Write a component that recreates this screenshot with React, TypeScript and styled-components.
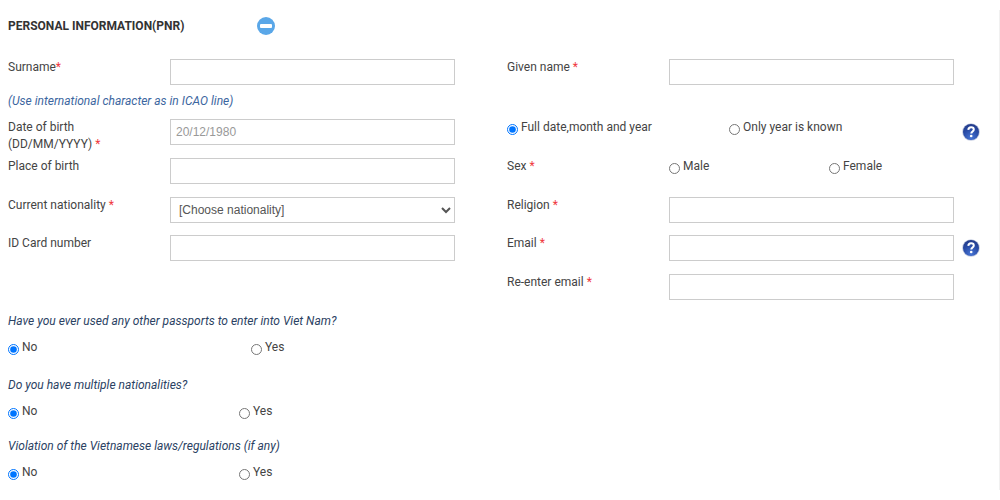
import React from "react";
import styled, { createGlobalStyle } from "styled-components";

const GlobalStyle = createGlobalStyle`
  *, *::before, *::after { box-sizing: border-box; }
  body {
    margin: 0;
    background: #fff;
    color: #444;
    font: 12px/17px Roboto, "Liberation Sans", sans-serif;
  }
`;

const Page = styled.main`
  padding: 10px 0 10px 0;
`;

const Panel = styled.form`
  border-right: 1px solid #f1f1f1;
  padding: 0 1px 9px 8px;
`;

const Header = styled.header`
  display: flex;
  align-items: center;
  height: 32px;
  gap: 73px;
`;

const Title = styled.h1`
  margin: 0;
  font-size: 12px;
  font-weight: 700;
  color: #333;
`;

const IconButton = styled.button`
  display: flex;
  padding: 0;
  border: 0;
  background: none;
  cursor: pointer;
`;

const HelpButton = styled(IconButton)`
  margin: 4px 0 0 8px;
`;

const Row = styled.div<{ $height?: number }>`
  display: grid;
  grid-template-columns: 162px 1fr 52px 162px 1fr 44px;
  align-items: start;
  height: ${(p) => p.$height ?? 39}px;
`;

const Label = styled.label<{ $right?: boolean }>`
  grid-column: ${(p) => (p.$right ? 4 : 1)};
`;

const GroupLabel = styled.span`
  grid-column: 4;
`;

const Star = styled.span`
  color: #f0383d;
`;

const Input = styled.input<{ $right?: boolean }>`
  grid-column: ${(p) => (p.$right ? 5 : 2)};
  width: 100%;
  height: 26px;
  padding: 0 5px;
  border: 1px solid #ccc;
  border-radius: 0;
  background: #fff;
  color: #444;
  font: 12px "Liberation Sans", Arial, sans-serif;
  &::placeholder { color: #999; opacity: 1; }
`;

const Select = styled.select`
  grid-column: 2;
  width: 100%;
  height: 26px;
  padding: 0 4px;
  border: 1px solid #ccc;
  border-radius: 0;
  background: #fff;
  color: #555;
  font: 12px "Liberation Sans", Arial, sans-serif;
`;

const Hint = styled.p`
  margin: 0 0 9px;
  font-style: italic;
  color: #3c66a0;
`;

const Fields = styled.div`
  padding-top: 17px;
`;

const Choices = styled.div<{ $first: number; $column?: string }>`
  grid-column: ${(p) => p.$column ?? "auto"};
  display: grid;
  grid-template-columns: ${(p) => p.$first}px 1fr;
`;

const Choice = styled.label`
  display: flex;
  gap: 3px;
  white-space: nowrap;
`;

const Radio = styled.input`
  width: 11px;
  height: 11px;
  margin: 5px 0 0;
`;

const Question = styled.fieldset<{ $gap: number }>`
  margin: 0;
  padding: 0 0 ${(p) => p.$gap}px;
  border: 0;
`;

const Legend = styled.legend`
  padding: 0 0 9px;
  font-style: italic;
  color: #2b4263;
`;

const MinusIcon = () => (
  <svg width="18" height="18" viewBox="0 0 18 18" aria-hidden="true">
    <circle cx="9" cy="9" r="9" fill="#5aa7e8" />
    <rect x="3" y="7" width="12" height="4" rx="1" fill="#fff" />
  </svg>
);

const HelpIcon = () => (
  <svg width="18" height="18" viewBox="0 0 18 18" aria-hidden="true">
    <defs>
      <radialGradient id="ball" cx="0.5" cy="0.85" r="0.8">
        <stop offset="0" stopColor="#4674d4" />
        <stop offset="0.6" stopColor="#2a4da8" />
        <stop offset="1" stopColor="#233c8c" />
      </radialGradient>
    </defs>
    <circle cx="9" cy="9" r="8.8" fill="#c3cbe0" />
    <circle cx="9" cy="9" r="8" fill="url(#ball)" />
    <path d="M6.3 6.9C6.4 5.1 7.6 4.2 9.1 4.2c1.6 0 2.7.9 2.7 2.3 0 2-2.5 1.9-2.500 4" fill="none" stroke="#fff" strokeWidth="2" />
    <circle cx="9.200" cy="13" r="1.300" fill="#fff" />
  </svg>
);

const Help = ({ topic }: { topic: string }) => (
  <HelpButton type="button" aria-label={topic}>
    <HelpIcon />
  </HelpButton>
);

type Option = { text: string; checked?: boolean };

type RadioPairProps = { name: string; label: string; first: number; column?: string; options: Option[] };

const RadioPair = ({ name, label, first, column, options }: RadioPairProps) => (
  <Choices role="radiogroup" aria-label={label} $first={first} $column={column}>
    {options.map((o) => (
      <Choice key={o.text}>
        <Radio type="radio" name={name} defaultChecked={o.checked} />
        {o.text}
      </Choice>
    ))}
  </Choices>
);

const questions = [
  { name: "passports", text: "Have you ever used any other passports to enter into Viet Nam?", first: 243, gap: 21 },
  { name: "nationalities", text: "Do you have multiple nationalities?", first: 231, gap: 18 },
  { name: "violation", text: "Violation of the Vietnamese laws/regulations (if any)", first: 231, gap: 0 },
];

export default function App() {
  return (
    <Page>
      <GlobalStyle />
      <Panel>
        <Header>
          <Title>PERSONAL INFORMATION(PNR)</Title>
          <IconButton type="button" aria-label="Collapse section">
            <MinusIcon />
          </IconButton>
        </Header>
        <Fields>
          <Row $height={34}>
            <Label htmlFor="surname">Surname<Star>*</Star></Label>
            <Input id="surname" />
            <Label $right htmlFor="given">Given name <Star>*</Star></Label>
            <Input $right id="given" />
          </Row>
          <Hint>(Use international character as in ICAO line)</Hint>
          <Row>
            <Label htmlFor="dob">Date of birth<br />(DD/MM/YYYY) <Star>*</Star></Label>
            <Input id="dob" placeholder="20/12/1980" />
            <RadioPair
              name="precision"
              label="Date precision"
              first={222}
              column="4 / 6"
              options={[{ text: "Full date,month and year", checked: true }, { text: "Only year is known" }]}
            />
            <Help topic="Help on date of birth" />
          </Row>
          <Row>
            <Label htmlFor="place">Place of birth</Label>
            <Input id="place" />
            <GroupLabel>Sex <Star>*</Star></GroupLabel>
            <RadioPair name="sex" label="Sex" first={160} column="5" options={[{ text: "Male" }, { text: "Female" }]} />
          </Row>
          <Row $height={38}>
            <Label htmlFor="nationality">Current nationality <Star>*</Star></Label>
            <Select id="nationality">
              <option>[Choose nationality]</option>
            </Select>
            <Label $right htmlFor="religion">Religion <Star>*</Star></Label>
            <Input $right id="religion" />
          </Row>
          <Row>
            <Label htmlFor="idcard">ID Card number</Label>
            <Input id="idcard" />
            <Label $right htmlFor="email">Email <Star>*</Star></Label>
            <Input $right id="email" type="email" />
            <Help topic="Help on email" />
          </Row>
          <Row>
            <Label $right htmlFor="email2">Re-enter email <Star>*</Star></Label>
            <Input $right id="email2" type="email" />
          </Row>
        </Fields>
        {questions.map((q) => (
          <Question key={q.name} $gap={q.gap}>
            <Legend>{q.text}</Legend>
            <RadioPair
              name={q.name}
              label={q.text}
              first={q.first}
              options={[{ text: "No", checked: true }, { text: "Yes" }]}
            />
          </Question>
        ))}
      </Panel>
    </Page>
  );
}
